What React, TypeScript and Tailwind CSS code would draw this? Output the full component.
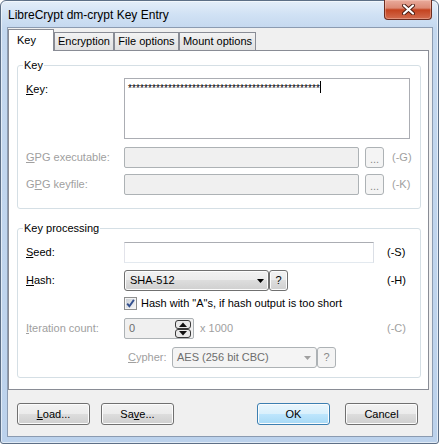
import React from "react";

const face =
  "rounded-[3px] border border-[#707070] bg-[linear-gradient(180deg,#f2f2f2_0%,#ebebeb_50%,#dddddd_50%,#cfcfcf_100%)] shadow-[inset_0_0_0_1px_#fcfcfc] text-[11px] leading-[13px] text-black";
const btn = `flex items-center justify-center ${face}`;
const btnPrimary =
  "flex items-center justify-center rounded-[3px] border border-[#3c7fb1] bg-[linear-gradient(180deg,#eaf6fd_0%,#d9f0fc_50%,#bee6fd_50%,#a7d9f5_100%)] shadow-[inset_0_0_0_1px_#fcfcfc] text-[11px] leading-[13px] text-black";
const disabledBox = "rounded-[2px] border border-[#adb2b5] bg-[#f0f0f0]";
const dimText = "text-[#a0a0a0]";

function U({ children }: { children: React.ReactNode }) {
  return <span className="underline decoration-1 underline-offset-[1px]">{children}</span>;
}

function Group({ title, className, children }: { title: string; className: string; children: React.ReactNode }) {
  return (
    <div className={`relative ml-[8px] w-[404px] rounded-[3px] border border-[#d5dfe5] ${className}`}>
      <span className="absolute left-[5px] -top-[7px] bg-white px-px leading-[13px] text-black">{title}</span>
      {children}
    </div>
  );
}

function CloseGlyph() {
  return (
    <svg width="13" height="11" viewBox="0 0 13 11">
      <path d="M2 1.5 L11 9.5 M11 1.5 L2 9.5" stroke="#4a1a10" strokeWidth="4" strokeLinecap="round" />
      <path d="M2 1.5 L11 9.5 M11 1.5 L2 9.5" stroke="#ffffff" strokeWidth="2.2" strokeLinecap="round" />
    </svg>
  );
}

function Arrow({ color }: { color: string }) {
  return (
    <svg width="7" height="4" viewBox="0 0 7 4">
      <path d="M0 0 H7 L3.5 4 Z" fill={color} />
    </svg>
  );
}

function Checkbox() {
  return (
    <svg width="13" height="13" viewBox="0 0 13 13">
      <defs>
        <linearGradient id="cbg" x1="0" y1="0" x2="1" y2="1">
          <stop offset="0" stopColor="#cbcfd5" />
          <stop offset="1" stopColor="#f6f6f6" />
        </linearGradient>
      </defs>
      <rect x="0.5" y="0.5" width="12" height="12" fill="#f4f4f4" stroke="#8e8f8f" />
      <rect x="2" y="2" width="9" height="9" fill="url(#cbg)" />
      <path d="M3.2 6.6 L5.4 9.2 L9.9 2.9" fill="none" stroke="#33508f" strokeWidth="1.9" />
    </svg>
  );
}

function Spin() {
  return (
    <svg width="16" height="18" viewBox="0 0 16 18">
      <rect x="0.5" y="0.5" width="15" height="8" rx="2.5" fill="#e9e9e9" stroke="#3a3a3a" />
      <rect x="0.5" y="9.5" width="15" height="8" rx="2.5" fill="#e9e9e9" stroke="#3a3a3a" />
      <path d="M4 7 H12 L8 2.5 Z" fill="#111" />
      <path d="M4 11 H12 L8 15.5 Z" fill="#111" />
    </svg>
  );
}

export default function App() {
  const stars = "*".repeat(48);

  return (
    <div className="w-[439px] h-[444px] flex flex-col rounded-t-[6px] rounded-b-[3px] border border-[#5d6f86] bg-[linear-gradient(180deg,#e4eef9_0px,#d0e1f4_14px,#c4d8ef_28px,#bcd2ec_100%)] shadow-[inset_0_0_0_1px_rgba(255,255,255,0.55)] font-['Liberation_Sans',Arial,sans-serif] text-[11px] leading-[13px] text-black select-none">
      {/* Title bar */}
      <div className="h-[27px] flex items-start justify-between">
        <span className="pl-[7px] pt-[7px] text-[12px] leading-[15px] text-black">LibreCrypt dm-crypt Key Entry</span>
        <div className="-mt-px mr-[6px] w-[48px] h-[20px] flex items-center justify-center rounded-b-[4px] border border-t-0 border-[#6d2c1f] bg-[linear-gradient(180deg,#e9ab9c_0%,#dc8a75_42%,#c4431f_52%,#d36c4f_100%)] shadow-[inset_0_0_0_1px_rgba(255,220,210,0.35)]">
          <CloseGlyph />
        </div>
      </div>

      {/* Client area */}
      <div className="ml-[7px] mr-[6px] h-[408px] flex flex-col bg-[#f0f0f0] shadow-[0_0_0_1px_#8b9bb1]">
        {/* Tabs */}
        <div className="flex items-end h-[22px]">
          <div className="relative z-10 -mb-px h-[22px] w-[46px] pl-[8px] pt-[4px] border border-b-0 border-[#898c95] bg-white">Key</div>
          <div className="h-[18px] w-[60px] flex items-center justify-center border border-b-0 border-[#898c95] bg-[linear-gradient(180deg,#f3f3f3_0%,#e9e9e9_50%,#e1e1e1_100%)]">Encryption</div>
          <div className="h-[18px] w-[65px] flex items-center justify-center border border-b-0 border-[#898c95] bg-[linear-gradient(180deg,#f3f3f3_0%,#e9e9e9_50%,#e1e1e1_100%)]">File options</div>
          <div className="h-[18px] w-[77px] flex items-center justify-center border border-b-0 border-[#898c95] bg-[linear-gradient(180deg,#f3f3f3_0%,#e9e9e9_50%,#e1e1e1_100%)]">Mount options</div>
        </div>

        {/* Tab panel */}
        <div className="w-[421px] h-[340px] border border-[#898c95] bg-white flex flex-col">
          <Group title="Key" className="mt-[14px] h-[144px]">
            <div className="pl-[8px] pt-[12px] flex flex-col">
              <div className="flex items-start">
                <span className="w-[98px] mt-[5px]"><U>K</U>ey:</span>
                <div className="w-[286px] h-[61px] border border-[#abadb3] bg-white pl-[3px] pt-[2px] flex items-start">
                  <span className="text-[10px] tracking-[0.11px] whitespace-nowrap pt-px">{stars}</span>
                  <span className="w-px h-[12px] bg-black" />
                </div>
              </div>
              <div className="mt-[8px] h-[21px] flex items-center">
                <span className={`w-[98px] ${dimText}`}><U>G</U>PG executable:</span>
                <div className="w-[268px] flex items-center">
                  <div className={`w-[235px] h-[21px] ${disabledBox}`} />
                  <div className="ml-[6px] w-[19px] h-[21px] rounded-[3px] border border-[#adb2b5] bg-[#f4f4f4] flex items-end justify-center pb-[3px] text-[#8a8a8a] leading-[10px]">...</div>
                </div>
                <span className={dimText}>(-G)</span>
              </div>
              <div className="mt-[6px] h-[21px] flex items-center">
                <span className={`w-[98px] ${dimText}`}>G<U>P</U>G keyfile:</span>
                <div className="w-[268px] flex items-center">
                  <div className={`w-[235px] h-[21px] ${disabledBox}`} />
                  <div className="ml-[6px] w-[19px] h-[21px] rounded-[3px] border border-[#adb2b5] bg-[#f4f4f4] flex items-end justify-center pb-[3px] text-[#8a8a8a] leading-[10px]">...</div>
                </div>
                <span className={dimText}>(-K)</span>
              </div>
            </div>
          </Group>

          <Group title="Key processing" className="mt-[19px] h-[150px]">
            <div className="pl-[8px] pt-[13px] flex flex-col">
              <div className="h-[21px] flex items-center">
                <span className="w-[98px]"><U>S</U>eed:</span>
                <div className="w-[263px] flex items-center">
                  <div className="w-[250px] h-[21px] border border-t-[#abadb3] border-l-[#e2e3ea] border-r-[#dbdfe6] border-b-[#e3e9ef] bg-white" />
                </div>
                <span>(-S)</span>
              </div>
              <div className="mt-[7px] h-[21px] flex items-center">
                <span className="w-[98px]"><U>H</U>ash:</span>
                <div className="w-[263px] flex items-center">
                  <div className={`w-[145px] h-[21px] pl-[5px] pr-[4px] flex items-center justify-between ${face}`}>
                    <span>SHA-512</span>
                    <Arrow color="#000" />
                  </div>
                  <div className={`w-[19px] h-[21px] ${btn}`}>?</div>
                </div>
                <span>(-H)</span>
              </div>
              <div className="mt-[6px] h-[13px] flex items-center">
                <span className="ml-[98px] flex"><Checkbox /></span>
                <span className="ml-[4px]">Hash with "A"s, if hash output is too short</span>
              </div>
              <div className="mt-[8px] h-[21px] flex items-center">
                <span className={`w-[98px] ${dimText}`}><U>I</U>teration count:</span>
                <div className="w-[263px] flex items-center">
                  <div className={`w-[70px] h-[21px] pl-[4px] pr-[2px] flex items-center justify-between ${disabledBox}`}>
                    <span className="text-[#6d6d6d]">0</span>
                    <Spin />
                  </div>
                  <span className={`ml-[6px] ${dimText}`}>x 1000</span>
                </div>
                <span className={dimText}>(-C)</span>
              </div>
              <div className="mt-[8px] h-[21px] flex items-center">
                <span className={`w-[146px] pl-[102px] ${dimText}`}><U>C</U>ypher:</span>
                <div className="w-[145px] h-[21px] pl-[4px] pr-[5px] flex items-center justify-between rounded-[3px] border border-[#adb2b5] bg-[#f4f4f4]">
                  <span className="text-[#6d6d6d]">AES (256 bit CBC)</span>
                  <Arrow color="#a0a0a0" />
                </div>
                <div className="w-[19px] h-[21px] flex items-center justify-center rounded-[3px] border border-[#adb2b5] bg-[#f4f4f4] text-[#8a8a8a]">?</div>
              </div>
            </div>
          </Group>
        </div>

        {/* Buttons */}
        <div className="mt-[13px] h-[22px] flex items-center pl-[9px] pr-[14px]">
          <div className={`w-[73px] h-[22px] ${btn}`}><U>L</U>oad...</div>
          <div className={`ml-[11px] w-[73px] h-[22px] ${btn}`}>Sa<U>v</U>e...</div>
          <div className="flex-1" />
          <div className={`w-[73px] h-[22px] ${btnPrimary}`}>OK</div>
          <div className={`ml-[15px] w-[73px] h-[22px] ${btn}`}>Cancel</div>
        </div>
      </div>
    </div>
  );
}
